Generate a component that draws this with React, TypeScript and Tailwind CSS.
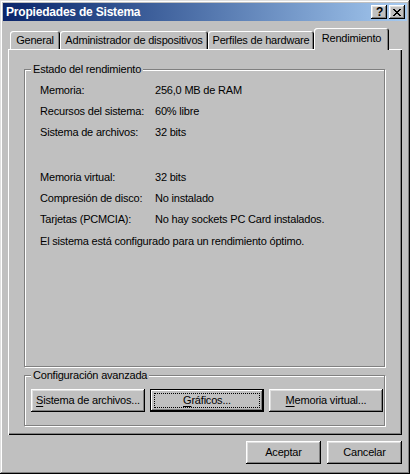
import React from "react";

const bevel =
  "shadow-[inset_-1px_-1px_#000,inset_1px_1px_#fff,inset_-2px_-2px_#808080,inset_2px_2px_#dfdfdf]";

function Btn({
  children,
  w,
  def,
}: {
  children: React.ReactNode;
  w: string;
  def?: boolean;
}) {
  if (def) {
    return (
      <div
        className={`${w} h-[23px] border border-black bg-[#c0c0c0] p-[3px] flex shadow-[inset_-1px_-1px_#000,inset_1px_1px_#fff,inset_-2px_-2px_#808080]`}
      >
        <div className="flex-1 border border-dotted border-black flex items-center justify-center">
          {children}
        </div>
      </div>
    );
  }
  return (
    <div
      className={`${w} h-[23px] bg-[#c0c0c0] flex items-center justify-center ${bevel}`}
    >
      {children}
    </div>
  );
}

function U({ children }: { children: React.ReactNode }) {
  return <span className="underline underline-offset-[2px]">{children}</span>;
}

function Tab({ label, w, active }: { label: string; w: string; active?: boolean }) {
  if (active) {
    return (
      <div
        className={`${w} relative z-10 h-[22px] -mb-[1px] bg-[#c0c0c0] rounded-t-[3px] flex items-center justify-center pb-[2px] shadow-[inset_1px_1px_#fff,inset_-1px_0_#000,inset_-2px_0_#808080]`}
      >
        {label}
      </div>
    );
  }
  return (
    <div
      className={`${w} h-[18px] bg-[#c0c0c0] rounded-t-[3px] flex items-center justify-center shadow-[inset_1px_1px_#fff,inset_-1px_0_#000,inset_-2px_0_#808080]`}
    >
      {label}
    </div>
  );
}

function Row({ a, b }: { a: string; b: string }) {
  return (
    <>
      <div>{a}</div>
      <div>{b}</div>
    </>
  );
}

export default function App() {
  return (
    <div className="w-[410px] h-[474px] bg-[#c0c0c0] p-[3px] flex flex-col font-['Liberation_Sans',Arial,sans-serif] text-[11px] tracking-[-0.2px] text-black shadow-[inset_-1px_-1px_#000,inset_1px_1px_#dfdfdf,inset_-2px_-2px_#808080,inset_2px_2px_#fff]">
      {/* Title bar */}
      <div className="h-[18px] flex items-center bg-gradient-to-r from-[#0a246a] to-[#a6caf0] pl-[3px] pr-[2px]">
        <span className="flex-1 text-white font-bold text-[12px] leading-none">
          Propiedades de Sistema
        </span>
        <div className="flex gap-[2px]">
          <div
            className={`w-[16px] h-[14px] bg-[#c0c0c0] flex items-center justify-center font-bold text-[12px] leading-none pl-[1px] ${bevel}`}
          >
            ?
          </div>
          <div
            className={`w-[16px] h-[14px] bg-[#c0c0c0] flex items-center justify-center ${bevel}`}
          >
            <svg width="8" height="7" viewBox="0 0 8 7" shapeRendering="crispEdges">
              <path
                fill="#000"
                d="M0 0h2v1H0zM6 0h2v1H6zM1 1h2v1H1zM5 1h2v1H5zM2 2h4v1H2zM3 3h2v1H3zM2 4h4v1H2zM1 5h2v1H1zM5 5h2v1H5zM0 6h2v1H0zM6 6h2v1H6z"
              />
            </svg>
          </div>
        </div>
      </div>

      {/* Body */}
      <div className="mt-[7px] px-[5px] flex flex-col">
        <div className="flex items-end h-[21px] pl-[2px]">
          <Tab label="General" w="w-[50px]" />
          <Tab label="Administrador de dispositivos" w="w-[148px]" />
          <Tab label="Perfiles de hardware" w="w-[106px]" />
          <Tab label="Rendimiento" w="w-[75px]" active />
        </div>

        <div className="h-[386px] bg-[#c0c0c0] pt-[20px] pl-[16px] pr-[17px] flex flex-col shadow-[inset_1px_1px_#fff,inset_-1px_-1px_#000,inset_-2px_-2px_#808080]">
          {/* Group 1 */}
          <div className="relative h-[298px] border border-[#808080] shadow-[inset_1px_1px_#fff,1px_1px_#fff] pt-[10px] pl-[15px]">
            <span className="absolute -top-[7px] left-[6px] px-[2px] bg-[#c0c0c0] leading-[13px]">
              Estado del rendimiento
            </span>
            <div className="grid grid-cols-[115px_1fr] leading-[21px]">
              <Row a="Memoria:" b="256,0 MB de RAM" />
              <Row a="Recursos del sistema:" b="60% libre" />
              <Row a="Sistema de archivos:" b="32 bits" />
            </div>
            <div className="h-[24px]" />
            <div className="grid grid-cols-[115px_1fr] leading-[21px]">
              <Row a="Memoria virtual:" b="32 bits" />
              <Row a="Compresión de disco:" b="No instalado" />
              <Row a="Tarjetas (PCMCIA):" b="No hay sockets PC Card instalados." />
            </div>
            <div className="mt-[1px] leading-[21px]">
              El sistema está configurado para un rendimiento óptimo.
            </div>
          </div>

          {/* Group 2 */}
          <div className="relative mt-[8px] h-[51px] border border-[#808080] shadow-[inset_1px_1px_#fff,1px_1px_#fff] pt-[13px] pl-[6px]">
            <span className="absolute -top-[7px] left-[6px] px-[2px] bg-[#c0c0c0] leading-[13px]">
              Configuración avanzada
            </span>
            <div className="flex gap-[5px]">
              <Btn w="w-[114px]">
                <span>
                  <U>S</U>istema de archivos...
                </span>
              </Btn>
              <Btn w="w-[114px]" def>
                <span>
                  <U>G</U>ráficos...
                </span>
              </Btn>
              <Btn w="w-[114px]">
                <span>
                  <U>M</U>emoria virtual...
                </span>
              </Btn>
            </div>
          </div>
        </div>

        <div className="flex justify-end gap-[6px] mt-[6px]">
          <Btn w="w-[75px]">Aceptar</Btn>
          <Btn w="w-[75px]">Cancelar</Btn>
        </div>
      </div>
    </div>
  );
}
